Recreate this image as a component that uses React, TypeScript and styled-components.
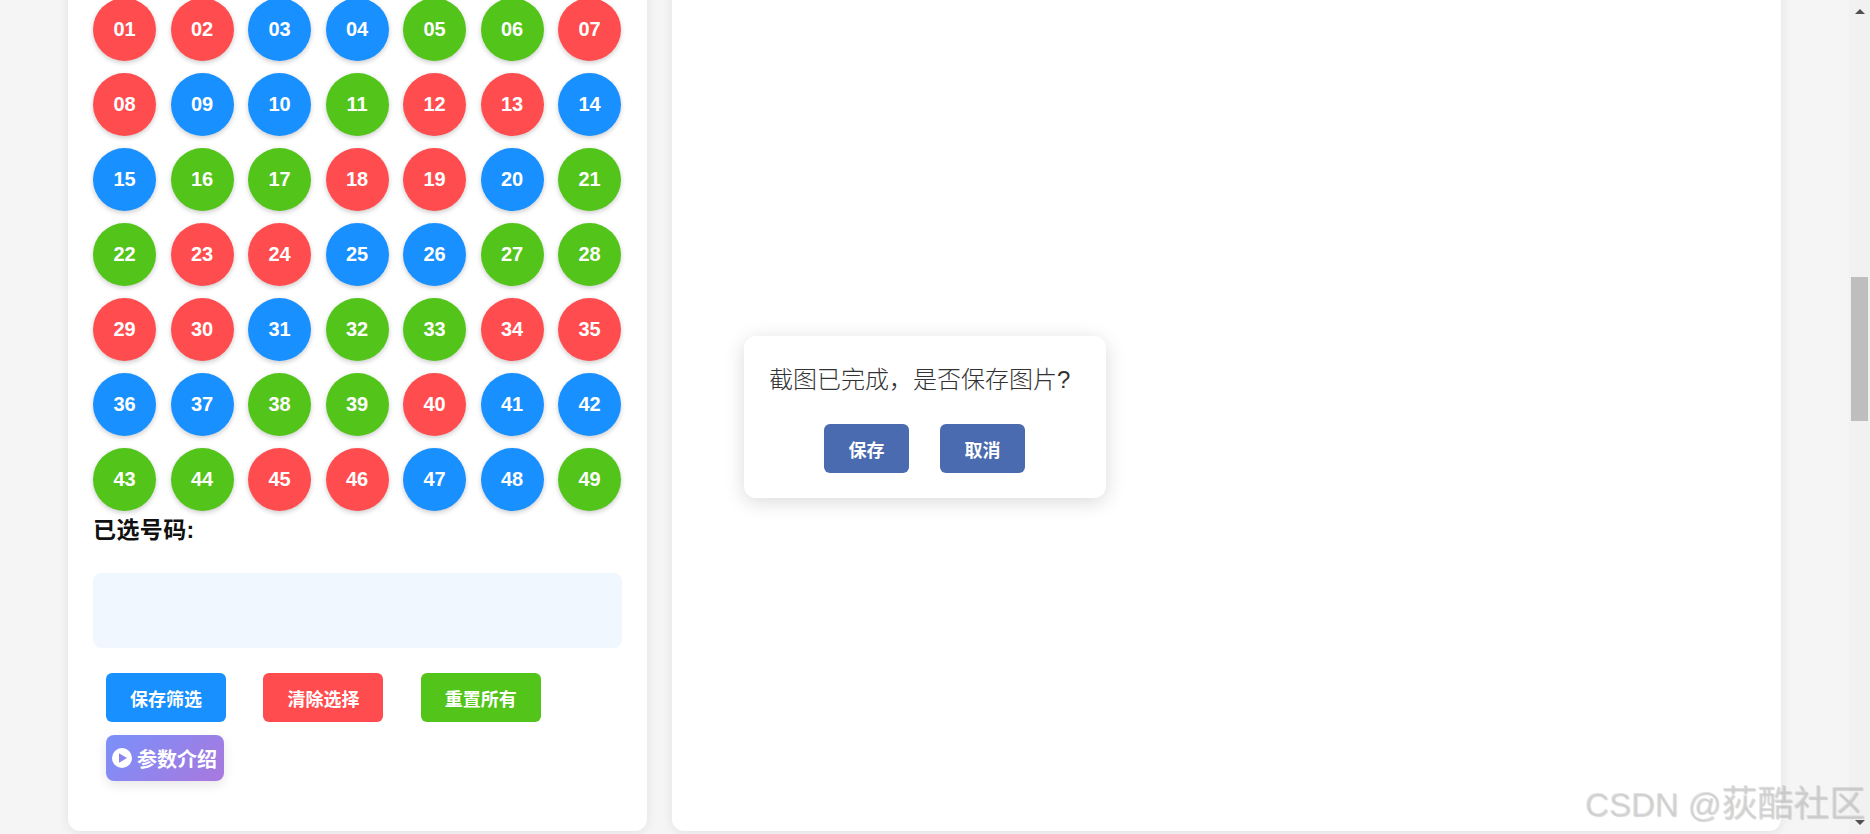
import { createGlobalStyle, styled } from 'styled-components'

type Tone = 'red' | 'blue' | 'green'

const toneColors: Record<Tone, string> = {
  red: '#ff4d4f',
  blue: '#1890ff',
  green: '#52c41a',
}

const redNumbers = [1, 2, 7, 8, 12, 13, 18, 19, 23, 24, 29, 30, 34, 35, 40, 45, 46]
const blueNumbers = [3, 4, 9, 10, 14, 15, 20, 25, 26, 31, 36, 37, 41, 42, 47, 48]

const toneOf = (n: number): Tone => {
  if (redNumbers.includes(n)) return 'red'
  if (blueNumbers.includes(n)) return 'blue'
  return 'green'
}

const numbers = Array.from({ length: 49 }, (_, i) => i + 1)

const GlobalStyle = createGlobalStyle`
  html, body {
    margin: 0;
    padding: 0;
    background: #f5f5f5;
    overflow: hidden;
  }
  * {
    box-sizing: border-box;
  }
`

const Page = styled.div`
  position: relative;
  display: flex;
  height: 834px;
  overflow: hidden;
  font-family: "Liberation Sans", "Noto Sans CJK SC", sans-serif;
`

const Columns = styled.div`
  flex: 1;
  display: flex;
  gap: 25px;
  align-items: flex-start;
  padding: 0 68px;
  margin-top: -27px;
`

const Panel = styled.section`
  background: #fff;
  border-radius: 12px;
  box-shadow: 0 2px 12px rgba(0, 0, 0, 0.08);
`

const FilterPanel = styled(Panel)`
  width: 579px;
  height: 858px;
  padding: 25px;
`

const PreviewPanel = styled(Panel)`
  position: relative;
  flex: 1;
  height: 858px;
`

const BallGrid = styled.div`
  display: grid;
  grid-template-columns: repeat(7, 63px);
  column-gap: 14.5px;
  row-gap: 12px;
`

const Ball = styled.div<{ $tone: Tone }>`
  width: 63px;
  height: 63px;
  border-radius: 50%;
  display: flex;
  align-items: center;
  justify-content: center;
  background: ${props => toneColors[props.$tone]};
  box-shadow: 0 2px 5px rgba(0, 0, 0, 0.2);
  color: #fff;
  font-size: 20px;
  font-weight: bold;
`

const SelectedTitle = styled.h3`
  margin: 4px 0 28px;
  font-size: 23px;
  letter-spacing: 0.4px;
  line-height: 30px;
  font-weight: bold;
  color: #111;
`

const SelectedBox = styled.div`
  height: 75px;
  background: #f0f7ff;
  border-radius: 8px;
`

const ActionBar = styled.div`
  display: flex;
  flex-wrap: wrap;
  column-gap: 37.4px;
  row-gap: 13px;
  padding: 0 13px;
  margin-top: 25px;
`

const ActionButton = styled.button<{ $tone: Tone }>`
  width: 120px;
  height: 49px;
  border: none;
  border-radius: 6px;
  background: ${props => toneColors[props.$tone]};
  color: #fff;
  font-family: inherit;
  font-size: 18px;
  font-weight: bold;
`

const GuideButton = styled.button`
  width: 118px;
  height: 46px;
  display: flex;
  align-items: center;
  gap: 5px;
  padding: 0 6px;
  border: none;
  border-radius: 8px;
  background: linear-gradient(135deg, #7a90fb, #a978dd);
  box-shadow: 0 4px 12px rgba(0, 0, 0, 0.1);
  color: #fff;
  font-family: inherit;
  font-size: 20px;
  font-weight: bold;
  white-space: nowrap;
`

const Dialog = styled.div`
  position: absolute;
  left: 72px;
  top: 363px;
  width: 362px;
  height: 162px;
  padding: 25px 25px 0;
  background: #fff;
  border-radius: 12px;
  box-shadow: 0 4px 20px rgba(0, 0, 0, 0.15);
`

const DialogText = styled.p`
  margin: 0 0 25px;
  font-size: 24px;
  font-weight: 300;
  line-height: 38px;
  color: #333;
  white-space: nowrap;
`

const DialogActions = styled.div`
  display: flex;
  gap: 31px;
  padding-left: 55px;
`

const DialogButton = styled.button`
  width: 85px;
  height: 49px;
  border: none;
  border-radius: 6px;
  background: #4a6bb0;
  color: #fff;
  font-family: inherit;
  font-size: 18px;
  font-weight: bold;
`

const ScrollTrack = styled.aside`
  flex: none;
  width: 21px;
  height: 834px;
  padding: 9px 2px;
  display: flex;
  flex-direction: column;
  align-items: center;
  background: #f1f1f1;
`

const ScrollThumb = styled.div`
  width: 17px;
  height: 144px;
  margin-top: 263px;
  margin-bottom: auto;
  background: #bebebe;
`

const Watermark = styled.div`
  position: absolute;
  right: 5px;
  bottom: 7px;
  font-size: 33px;
  line-height: 44px;
  white-space: nowrap;
  color: rgba(200, 200, 200, 0.5);
  text-shadow: 1px 1px 1px rgba(0, 0, 0, 0.16);
`

const WatermarkName = styled.span`
  font-size: 36px;
`

const PlayIcon = () => (
  <svg width="20" height="20" viewBox="0 0 20 20" aria-hidden="true" style={{ flex: 'none' }}>
    <circle cx="10" cy="10" r="10" fill="#fff" />
    <path d="M7 5.2 15 10l-8 4.8z" fill="#8a86ec" />
  </svg>
)

const ArrowUp = () => (
  <svg width="10" height="5" viewBox="0 0 10 5" aria-hidden="true" style={{ display: 'block', flex: 'none' }}>
    <path d="M5 0 10 5H0z" fill="#505050" />
  </svg>
)

const ArrowDown = () => (
  <svg width="10" height="5" viewBox="0 0 10 5" aria-hidden="true" style={{ display: 'block', flex: 'none' }}>
    <path d="M0 0h10L5 5z" fill="#505050" />
  </svg>
)

export default function App() {
  return (
    <>
      <GlobalStyle />
      <Page>
        <Columns>
          <FilterPanel>
            <BallGrid>
              {numbers.map(n => (
                <Ball key={n} $tone={toneOf(n)}>
                  {String(n).padStart(2, '0')}
                </Ball>
              ))}
            </BallGrid>
            <SelectedTitle>已选号码:</SelectedTitle>
            <SelectedBox />
            <ActionBar>
              <ActionButton $tone="blue">保存筛选</ActionButton>
              <ActionButton $tone="red">清除选择</ActionButton>
              <ActionButton $tone="green">重置所有</ActionButton>
              <GuideButton>
                <PlayIcon />
                参数介绍
              </GuideButton>
            </ActionBar>
          </FilterPanel>
          <PreviewPanel>
            <Dialog>
              <DialogText>截图已完成，是否保存图片?</DialogText>
              <DialogActions>
                <DialogButton>保存</DialogButton>
                <DialogButton>取消</DialogButton>
              </DialogActions>
            </Dialog>
          </PreviewPanel>
        </Columns>
        <ScrollTrack>
          <ArrowUp />
          <ScrollThumb />
          <ArrowDown />
        </ScrollTrack>
        <Watermark>
          CSDN @<WatermarkName>荻酷社区</WatermarkName>
        </Watermark>
      </Page>
    </>
  )
}
